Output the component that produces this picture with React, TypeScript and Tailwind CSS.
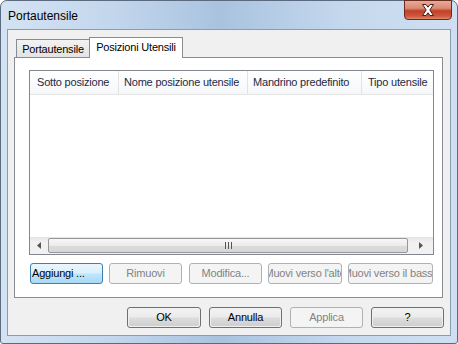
import React from "react";

const font = { fontFamily: '"Liberation Sans", Arial, sans-serif' };

function NormalButton({ label, w }: { label: string; w: string }) {
  return (
    <div
      className={`${w} h-[21px] rounded-[3px] border border-[#707070] p-px`}
    >
      <div className="flex h-full w-full items-center justify-center rounded-[2px] bg-[linear-gradient(to_bottom,#f2f2f2_0%,#ebebeb_48%,#dddddd_52%,#cfcfcf_100%)] text-[11px] tracking-[-0.2px] text-black">
        {label}
      </div>
    </div>
  );
}

function DisabledButton({
  label,
  w,
  ml,
}: {
  label: string;
  w: string;
  ml: string;
}) {
  return (
    <div
      className={`${w} ${ml} flex h-[21px] items-center justify-center overflow-hidden whitespace-nowrap rounded-[3px] border border-[#adb2b5] bg-[#f4f4f4] text-[11px] tracking-[-0.2px] text-[#838383]`}
    >
      {label}
    </div>
  );
}

export default function App() {
  return (
    <div className="h-[344px] w-[458px] bg-white" style={font}>
      <div className="relative flex h-[344px] w-[458px] flex-col rounded-t-[7px] rounded-b-[3px] border border-[#5a6b80] bg-[linear-gradient(to_right,#d4e3f3_0%,#c2d6ec_25%,#a9c3df_48%,#c4d8ed_75%,#cfdff1_100%)] px-[6px] pb-[7px]">
        {/* title bar */}
        <div className="flex h-[28px] items-center pl-[1px] pt-[1px] text-[12px] text-black">
          Portautensile
        </div>
        {/* close button */}
        <div className="absolute left-[403px] top-[-1px] flex h-[20px] w-[48px] items-center justify-center rounded-b-[4px] border border-[#6b2a1e] bg-[linear-gradient(to_bottom,#e9a899_0%,#d98b76_40%,#c43f26_55%,#cc5a40_85%,#dd8a6e_100%)]">
          <svg width="14" height="12" viewBox="0 0 14 12">
            <path
              d="M1.5 0.5 H5 L7 3.2 L9 0.5 H12.5 L8.8 6 L12.5 11.5 H9 L7 8.8 L5 11.5 H1.5 L5.2 6 Z"
              fill="#ffffff"
              stroke="#4b2019"
              strokeWidth="1"
              strokeLinejoin="round"
            />
          </svg>
        </div>
        {/* client area */}
        <div className="flex h-[307px] w-[444px] flex-col border border-[#8a9cb2] bg-[#f0f0f0] pl-[6px] pt-[7px]">
          {/* tabs */}
          <div className="flex h-[20px] items-end pl-[2px]">
            <div className="flex h-[18px] w-[74px] items-center justify-center border border-b-0 border-[#898c95] bg-[linear-gradient(to_bottom,#f2f2f2,#e3e3e3)] pt-px text-[11px] tracking-[-0.2px] text-black">
              Portautensile
            </div>
            <div className="relative z-10 -mb-px -ml-px flex h-[21px] w-[94px] items-center justify-center border border-b-0 border-[#898c95] bg-white pb-[2px] text-[11px] tracking-[-0.2px] text-black">
              Posizioni Utensili
            </div>
          </div>
          {/* panel */}
          <div className="flex h-[241px] w-[429px] flex-col border border-[#898c95] bg-white pl-[14px] pt-[12px]">
            {/* listview */}
            <div className="flex h-[185px] w-[405px] flex-col border border-[#828790] bg-white">
              <div className="flex h-[24px] border-b border-[#e5e5e5] bg-[linear-gradient(to_bottom,#ffffff,#f5f7f9)] text-[11px] tracking-[-0.2px] text-[#1e2a44]">
                <div className="flex w-[89px] items-center border-r border-[#e2e3e5] pl-[7px] whitespace-nowrap">
                  Sotto posizione
                </div>
                <div className="flex w-[129px] items-center border-r border-[#e2e3e5] pl-[5px] whitespace-nowrap overflow-hidden">
                  Nome posizione utensile
                </div>
                <div className="flex w-[114px] items-center border-r border-[#e2e3e5] pl-[5px] whitespace-nowrap overflow-hidden">
                  Mandrino predefinito
                </div>
                <div className="flex flex-1 items-center overflow-hidden whitespace-nowrap pl-[6px]">
                  Tipo utensile
                </div>
              </div>
              <div className="flex-1" />
              {/* scrollbar */}
              <div className="flex h-[17px] items-center bg-[linear-gradient(to_bottom,#e4e4e4,#f1f1f1_30%,#f1f1f1)]">
                <div className="flex h-full w-[18px] items-center justify-center">
                  <svg width="4" height="7" viewBox="0 0 4 7">
                    <path d="M4 0 L0 3.5 L4 7 Z" fill="#555555" />
                  </svg>
                </div>
                <div className="flex h-[15px] w-[360px] items-center justify-center rounded-[2px] border border-[#979797] bg-[linear-gradient(to_bottom,#f7f7f7,#ececec_50%,#dcdcdc_55%,#d6d6d6)]">
                  <svg width="7" height="7" viewBox="0 0 7 7">
                    <rect x="0" y="0" width="1" height="7" fill="#555" />
                    <rect x="3" y="0" width="1" height="7" fill="#555" />
                    <rect x="6" y="0" width="1" height="7" fill="#555" />
                  </svg>
                </div>
                <div className="flex h-full flex-1 items-center justify-center">
                  <svg width="4" height="7" viewBox="0 0 4 7">
                    <path d="M0 0 L4 3.5 L0 7 Z" fill="#555555" />
                  </svg>
                </div>
              </div>
            </div>
            {/* panel buttons */}
            <div className="mt-[8px] flex">
              <div className="ml-px flex h-[21px] w-[73px] items-center rounded-[3px] border border-[#3c7fb1] bg-[linear-gradient(to_bottom,#eaf6fd_0%,#d9f0fc_48%,#bee6fd_52%,#a7d9f5_100%)] pl-[1px] text-[11px] tracking-[-0.2px] text-black">
                Aggiungi ...
              </div>
              <DisabledButton label="Rimuovi" w="w-[73px]" ml="ml-[6px]" />
              <DisabledButton label="Modifica..." w="w-[73px]" ml="ml-[7px]" />
              <DisabledButton
                label="Muovi verso l'alto"
                w="w-[74px]"
                ml="ml-[6px]"
              />
              <DisabledButton
                label="Muovi verso il basso"
                w="w-[85px]"
                ml="ml-[6px]"
              />
            </div>
          </div>
          {/* dialog buttons */}
          <div className="mt-[9px] flex justify-end gap-[8px] pr-[6px]">
            <NormalButton label="OK" w="w-[74px]" />
            <NormalButton label="Annulla" w="w-[73px]" />
            <div className="flex h-[21px] w-[73px] items-center justify-center rounded-[3px] border border-[#adb2b5] bg-[#f4f4f4] text-[11px] tracking-[-0.2px] text-[#838383]">
              Applica
            </div>
            <NormalButton label="?" w="w-[73px]" />
          </div>
        </div>
      </div>
    </div>
  );
}
